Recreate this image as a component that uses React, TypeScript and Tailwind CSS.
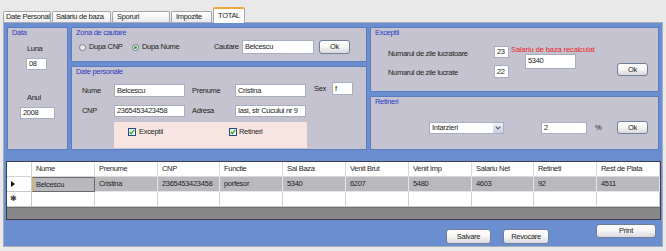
import { ReactNode } from 'react';

type Props = { children?: ReactNode; className?: string };

const headers = ['Nume', 'Prenume', 'CNP', 'Functie', 'Sal Baza', 'Venit Brut', 'Venit Imp', 'Salariu Net', 'Retineti', 'Rest de Plata'];
const row = ['Belcescu', 'Cristina', '2365453423458', 'porfesor', '5340', '6207', '5480', '4603', '92', '4511'];

const Tab = ({ children, className = '' }: Props) => (
  <div className={`flex h-[11px] items-center rounded-t-[2px] border border-b-0 border-[#a3a7ad] bg-linear-to-b from-white to-[#ebebef] ${className}`}>
    {children}
  </div>
);

const TextBox = ({ children, className = '' }: Props) => (
  <div className={`flex items-center border border-[#a5afbf] bg-white pl-[2px] ${className}`}>{children}</div>
);

const Btn = ({ children, className = '' }: Props) => (
  <div className={`flex items-center justify-center rounded-[3px] border border-[#6f809a] bg-linear-to-b from-white via-[#f5f5f3] to-[#d9d9df] ${className}`}>
    {children}
  </div>
);

const Radio = ({ checked }: { checked?: boolean }) => (
  <span className="flex h-[7px] w-[7px] items-center justify-center rounded-full border border-[#6f7f99] bg-linear-to-br from-[#dcdcdc] to-white">
    {checked && <span className="h-[3px] w-[3px] rounded-full bg-[#2b9e2b]" />}
  </span>
);

const Check = () => (
  <span className="flex h-[8px] w-[8px] items-center justify-center border border-[#1f4f7f] bg-linear-to-br from-[#e2e2dc] to-white">
    <svg width="6" height="6" viewBox="0 0 6 6">
      <polyline points="0.8,3 2.3,4.6 5.2,1.2" fill="none" stroke="#21a121" strokeWidth="1.3" />
    </svg>
  </span>
);

const Group = ({ title, children, className = '' }: Props & { title: string }) => (
  <div className={`flex flex-col border border-[#5a7cc0] bg-[#c5c3cf] ${className}`}>
    <div className="flex h-[9px] items-center pl-[4px] text-[#2a3cc4]">{title}</div>
    {children}
  </div>
);

export default function App() {
  return (
    <div className="h-[251px] w-[666px] overflow-hidden whitespace-nowrap bg-[#e9e9e9] font-['Liberation_Sans',Arial,sans-serif] text-[7.5px] leading-none tracking-[-0.3px] text-[#1e1e1e]">
      {/* tab strip */}
      <div className="flex h-[22px] items-end gap-[1px] pl-[3px]">
        <Tab className="w-[48px] pl-[2px]">Date Personal</Tab>
        <Tab className="w-[59px] pl-[3px]">Salariu de baza</Tab>
        <Tab className="w-[58px] pl-[4px]">Sporuri</Tab>
        <Tab className="w-[41px] pl-[4px]">Impozite</Tab>
        <div className="relative z-10 -mb-px flex h-[16px] w-[32px] items-center justify-center rounded-t-[2px] border border-b-0 border-[#a3a7ad] border-t-2 border-t-[#f0a83a] bg-white">
          TOTAL
        </div>
      </div>

      {/* tab page */}
      <div className="ml-[3px] flex h-[225px] w-[660px] flex-col border border-[#a9adb5] bg-[#6a8ed0] pl-[1px] pt-[4px]">
        <div className="ml-[2px] flex gap-[3px]">
          {/* Data */}
          <Group title="Data" className="h-[123px] w-[61px]">
            <div className="ml-[19px] mt-[7px] flex h-[9px] items-center">Luna</div>
            <TextBox className="ml-[18px] mt-[5px] h-[12px] w-[21px]">08</TextBox>
            <div className="ml-[19px] mt-[23px] flex h-[9px] items-center">Anul</div>
            <TextBox className="ml-[12px] mt-[5px] h-[12px] w-[35px]">2008</TextBox>
          </Group>

          <div className="flex w-[296px] flex-col gap-[4px]">
            {/* Zona de cautare */}
            <Group title="Zona de cautare" className="h-[35px]">
              <div className="mt-[3px] flex h-[14px] items-center pl-[7px]">
                <div className="flex w-[53px] items-center gap-[3px]">
                  <Radio />
                  <span>Dupa CNP</span>
                </div>
                <div className="flex w-[82px] items-center gap-[3px]">
                  <Radio checked />
                  <span>Dupa Nume</span>
                </div>
                <span className="w-[28px]">Cautare</span>
                <TextBox className="h-[14px] w-[72px]">Belcescu</TextBox>
                <Btn className="ml-[5px] h-[14px] w-[31px]">Ok</Btn>
              </div>
            </Group>

            {/* Date personale */}
            <Group title="Date personale" className="h-[84px]">
              <div className="mt-[6px] flex items-start">
                <div className="ml-[10px] mt-[2px] flex h-[13px] w-[32px] items-center">Nume</div>
                <TextBox className="mt-[2px] h-[13px] w-[71px]">Belcescu</TextBox>
                <div className="ml-[7px] mt-[2px] flex h-[13px] w-[43px] items-center">Prenume</div>
                <TextBox className="mt-[2px] h-[13px] w-[71px]">Cristina</TextBox>
                <div className="ml-[8px] flex h-[13px] w-[18px] items-center">Sex</div>
                <TextBox className="h-[13px] w-[21px]">f</TextBox>
              </div>
              <div className="mt-[8px] flex items-center">
                <div className="ml-[10px] flex h-[12px] w-[32px] items-center">CNP</div>
                <TextBox className="h-[12px] w-[71px]">2365453423458</TextBox>
                <div className="ml-[7px] flex h-[12px] w-[43px] items-center">Adresa</div>
                <TextBox className="h-[12px] w-[71px]">Iasi, str Cucului nr 9</TextBox>
              </div>
              <div className="ml-[42px] mt-[5px] flex h-[26px] w-[193px] items-start bg-[#f8e5e1] pl-[14px] pt-[6px]">
                <div className="flex w-[101px] items-center gap-[3px]">
                  <Check />
                  <span>Exceptii</span>
                </div>
                <div className="flex items-center gap-[2px]">
                  <Check />
                  <span>Retineri</span>
                </div>
              </div>
            </Group>
          </div>

          <div className="flex w-[289px] flex-col gap-[4px]">
            {/* Exceptii */}
            <Group title="Exceptii" className="h-[65px]">
              <div className="flex items-start">
                <div className="ml-[17px] flex w-[106px] flex-col">
                  <div className="mt-[12px] flex h-[9px] items-center">Numarul de zile lucratoare</div>
                  <div className="mt-[10px] flex h-[9px] items-center">Numarul de zile lucrate</div>
                </div>
                <div className="flex w-[15px] flex-col">
                  <TextBox className="mt-[9px] h-[12px] w-[15px]">23</TextBox>
                  <TextBox className="mt-[7px] h-[13px] w-[15px]">22</TextBox>
                </div>
                <div className="ml-[2px] flex w-[78px] flex-col">
                  <div className="mt-[9px] flex h-[8px] items-center tracking-[-0.1px] text-[#e8262a]">Salariu de baza recalculat</div>
                  <TextBox className="ml-[14px] h-[15px] w-[51px] items-start pt-[2px]">5340</TextBox>
                </div>
                <Btn className="ml-[28px] mt-[26px] h-[13px] w-[31px]">Ok</Btn>
              </div>
            </Group>

            {/* Retineri */}
            <Group title="Retineri" className="h-[54px]">
              <div className="mt-[15px] flex h-[13px] items-center">
                <div className="ml-[58px] flex h-[12px] w-[75px] items-center border border-[#a5afbf] bg-white">
                  <span className="flex-1 pl-[2px]">Intarzieri</span>
                  <span className="flex h-full w-[10px] items-center justify-center bg-linear-to-b from-[#eef0f6] to-[#c9d0de]">
                    <svg width="6" height="4" viewBox="0 0 6 4">
                      <polyline points="0.7,0.7 3,3 5.3,0.7" fill="none" stroke="#4d6185" strokeWidth="1.2" />
                    </svg>
                  </span>
                </div>
                <TextBox className="ml-[37px] h-[12px] w-[46px]">2</TextBox>
                <span className="ml-[8px] w-[22px]">%</span>
                <Btn className="h-[13px] w-[31px]">Ok</Btn>
              </div>
            </Group>
          </div>
        </div>

        {/* data grid */}
        <div className="ml-[1px] mt-[11px] flex h-[59px] w-[655px] flex-col border border-[#3c3c4a] bg-[#8a8a8a]">
          <div className="grid grid-cols-[25px_63px_63px_62px_63px_63px_63px_63px_62px_63px_63px] grid-rows-[15px_15px_15px]">
            <div className="border-b border-r border-[#d4d4d4] bg-white" />
            {headers.map(h => (
              <div key={h} className="flex items-center border-b border-r border-[#d9d9d9] bg-white pl-[4px]">
                {h}
              </div>
            ))}
            <div className="flex items-center border-b border-r border-[#c8c8c8] bg-white pl-[4px]">
              <svg width="4" height="6" viewBox="0 0 4 6">
                <polygon points="0,0 4,3 0,6" fill="#111" />
              </svg>
            </div>
            {row.map((v, i) =>
              i === 0 ? (
                <div key={i} className="flex items-center border border-[#6a6a6a] border-l-[#e2b23c] bg-[#b9b9bd] pl-[3px]">
                  {v}
                </div>
              ) : (
                <div key={i} className="flex items-center border-b border-r border-[#e6e6e8] bg-[#b9b9bd] pl-[4px]">
                  {v}
                </div>
              )
            )}
            <div className="flex items-center border-b border-r border-[#c8c8c8] bg-white pl-[3px] text-[#444]">
              <span className="text-[8px]">✱</span>
            </div>
            {row.map((_, i) => (
              <div key={i} className="border-b border-r border-[#cfcfcf] bg-white" />
            ))}
          </div>
          <div className="flex-1 border-t border-[#6e6e6e] bg-[#878787]" />
        </div>

        {/* buttons */}
        <div className="mt-[4px] flex items-start justify-end pr-[6px]">
          <Btn className="mr-[12px] mt-[5px] h-[15px] w-[45px]">Salvare</Btn>
          <Btn className="mr-[47px] mt-[5px] h-[15px] w-[46px]">Revocare</Btn>
          <Btn className="h-[14px] w-[60px]">Print</Btn>
        </div>
      </div>
    </div>
  );
}
